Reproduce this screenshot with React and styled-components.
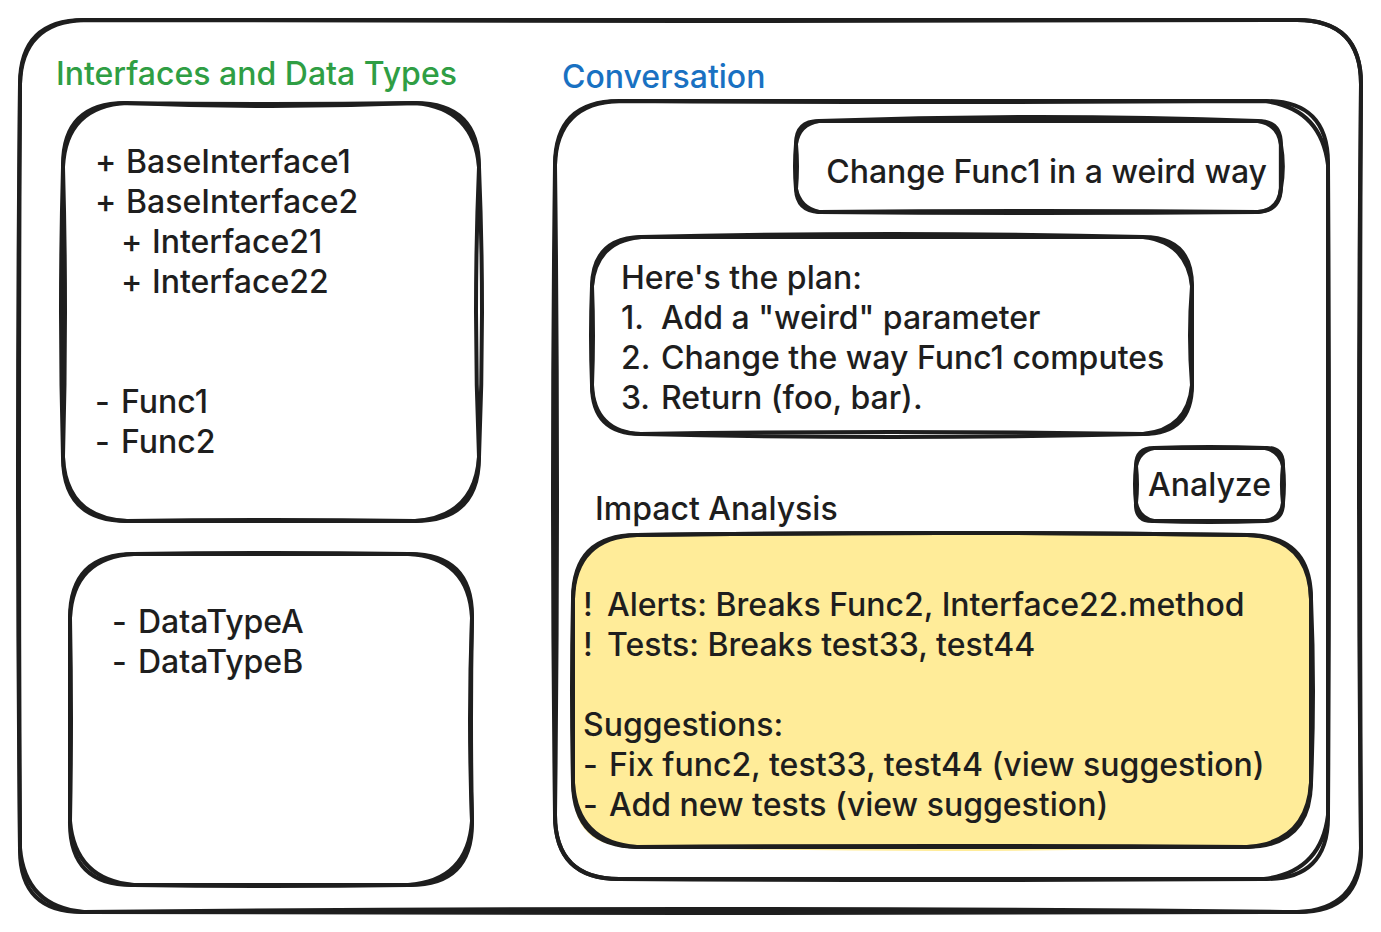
import React, { useLayoutEffect, useRef, useState } from "react";
import styled, { createGlobalStyle, css } from "styled-components";

const ink = "#1e1e1e";

const GlobalStyle = createGlobalStyle`
  *, *::before, *::after { box-sizing: border-box; }
  body { margin: 0; background: #ffffff; }
`;

/* Each pass goes once round the frame. The edge values say how far the middle
   of that edge bows outwards, the corner values how far the corner is pushed out. */
const outline = (w, h, radius, pass) => {
  const r = Math.min(radius, w / 2, h / 2);
  const { t = 0, e = 0, b = 0, l = 0, tl = 0, tr = 0, br = 0, bl = 0 } = pass;
  return [
    `M${r} 0`,
    `Q${w / 2} ${-2 * t} ${w - r} 0`,
    `Q${w + tr} ${-tr} ${w} ${r}`,
    `Q${w + 2 * e} ${h / 2} ${w} ${h - r}`,
    `Q${w + br} ${h + br} ${w - r} ${h}`,
    `Q${w / 2} ${h + 2 * b} ${r} ${h}`,
    `Q${-bl} ${h + bl} 0 ${h - r}`,
    `Q${-2 * l} ${h / 2} 0 ${r}`,
    `Q${-tl} ${-tl} ${r} 0`,
  ].join(" ");
};

const Drawing = styled.svg`
  position: absolute;
  inset: 0;
  width: 100%;
  height: 100%;
  overflow: visible;
  pointer-events: none;
  z-index: -1;
`;

function SketchFrame({ radius, passes, fill, fillPass }) {
  const ref = useRef(null);
  const [size, setSize] = useState({ w: 0, h: 0 });
  useLayoutEffect(() => {
    const measure = () => {
      const box = ref.current.getBoundingClientRect();
      setSize({ w: box.width, h: box.height });
    };
    measure();
    const observer = new ResizeObserver(measure);
    observer.observe(ref.current);
    return () => observer.disconnect();
  }, []);
  return (
    <Drawing ref={ref} aria-hidden="true">
      {size.w > 0 && fill && <path d={outline(size.w, size.h, radius, fillPass)} fill={fill} />}
      {size.w > 0 &&
        passes.map((pass, i) => (
          <path
            key={i}
            d={outline(size.w, size.h, radius, pass)}
            fill="none"
            stroke={ink}
            strokeWidth="4"
            strokeLinecap="round"
          />
        ))}
    </Drawing>
  );
}

const sketched = css`
  position: relative;
  isolation: isolate;
`;

const Page = styled.div`
  min-height: 100vh;
  padding: 20px;
  color: ${ink};
  font-family: Inter, "Liberation Sans", sans-serif;
  font-size: 32px;
  font-weight: 500;
  line-height: 40px;
  white-space: nowrap;
`;

const Board = styled.main`
  ${sketched}
  display: grid;
  grid-template-columns: 423fr 773fr;
  column-gap: 76px;
  align-items: start;
  padding: 33px 33px 27px 36px;
`;

const Column = styled.section`
  display: flex;
  flex-direction: column;
  min-width: 0;
`;

const Title = styled.h2`
  margin: ${(p) => (p.$inset ? "4px 0 4px 7px" : "1px 0 9px")};
  color: ${(p) => p.$color};
  font: inherit;
`;

const Panel = styled.div`
  ${sketched}
`;

const InterfacePanel = styled(Panel)`
  display: flex;
  flex-direction: column;
  gap: 80px;
  margin: 0 0 33px 7px;
  padding: 39px 32px 59px;
`;

const TypePanel = styled(Panel)`
  min-height: 331px;
  margin: 0 7px 0 14px;
  padding: 48px 42px;
`;

const Lines = styled.ul`
  margin: 0;
  padding: 0 0 0 ${(p) => (p.$nested ? "26px" : "0")};
  list-style: none;
`;

const Line = styled.li`
  display: flex;
`;

const Marker = styled.span`
  flex: none;
  width: ${(p) => p.$width}px;
`;

const Chat = styled(Panel)`
  display: flex;
  flex-direction: column;
  padding: 20px 17px 32px 18px;
`;

const Request = styled(Panel)`
  align-self: flex-end;
  min-width: 484px;
  margin: 0 30px 25px 0;
  padding: 31px 14px 20px 30px;
`;

const Reply = styled(Panel)`
  align-self: flex-start;
  min-width: 600px;
  margin: 0 0 14px 19px;
  padding: 21px 27px 16px 29px;
`;

const Paragraph = styled.p`
  margin: 0;
`;

const ImpactBar = styled.div`
  display: flex;
  justify-content: space-between;
  height: 81px;
  margin: 0 28px 6px 22px;
`;

const ImpactTitle = styled.h3`
  align-self: flex-end;
  margin: 0;
  font: inherit;
`;

const AnalyzeButton = styled.button`
  ${sketched}
  align-self: flex-start;
  min-width: 146px;
  height: 73px;
  padding: 0 12px;
  border: 0;
  background: none;
  color: inherit;
  font: inherit;
  cursor: pointer;
`;

const Impact = styled(Panel)`
  display: flex;
  flex-direction: column;
  gap: 40px;
  padding: 50px 10px 22px;
`;

const SuggestionLink = styled.a`
  color: inherit;
  text-decoration: none;
`;

function Row({ mark, width = 26, children }) {
  return (
    <Line>
      <Marker $width={width}>{mark}</Marker>
      <span>{children}</span>
    </Line>
  );
}

export default function App() {
  return (
    <Page>
      <GlobalStyle />
      <Board>
        <SketchFrame
          radius={64}
          passes={[
            { t: 0, e: -2, b: -3, l: 1, bl: -5, br: 1 },
            { t: -1, e: -1, b: 1, l: 2, tl: -2, bl: 1, br: -2 },
          ]}
        />
        <Column>
          <Title $color="#2f9e44">Interfaces and Data Types</Title>
          <InterfacePanel>
            <SketchFrame
              radius={64}
              passes={[
                { t: -1, e: -3, l: 2, tl: -3, tr: -5 },
                { t: -3, e: 3, b: -1, l: -2, tl: 1, bl: -3, br: -4 },
              ]}
            />
            <Lines>
              <Row mark="+" width={31}>BaseInterface1</Row>
              <Row mark="+" width={31}>BaseInterface2</Row>
              <li>
                <Lines $nested>
                  <Row mark="+" width={31}>Interface21</Row>
                  <Row mark="+" width={31}>Interface22</Row>
                </Lines>
              </li>
            </Lines>
            <Lines>
              <Row mark="-">Func1</Row>
              <Row mark="-">Func2</Row>
            </Lines>
          </InterfacePanel>
          <TypePanel>
            <SketchFrame
              radius={64}
              passes={[
                { t: 1, e: -2, l: 0, tl: -3, tr: 1, bl: -5, br: -4 },
                { t: 0, e: -1, b: 1, l: -1, tr: -3, bl: 1, br: 1 },
              ]}
            />
            <Lines>
              <Row mark="-">DataTypeA</Row>
              <Row mark="-">DataTypeB</Row>
            </Lines>
          </TypePanel>
        </Column>
        <Column>
          <Title $color="#1971c2" $inset>Conversation</Title>
          <Chat>
            <SketchFrame
              radius={64}
              passes={[
                { t: 0, e: 1, b: 0, l: 2, tl: -2, tr: 1, br: 1 },
                { t: -1, e: 0, b: 1, l: -2, tr: -7, br: -7 },
              ]}
            />
            <Request>
              <SketchFrame
                radius={23}
                passes={[
                  { t: 4, e: 2, b: 1, l: 1, tl: 0, tr: 0, bl: -4, br: -1 },
                  { t: 0, e: 0, b: -1, l: -1, tl: -3, tr: -3, bl: -1, br: -2 },
                ]}
              />
              <Paragraph>Change Func1 in a weird way</Paragraph>
            </Request>
            <Reply>
              <SketchFrame
                radius={49}
                passes={[
                  { t: 3, e: -2, b: 3, l: 1, tl: -4, tr: 0 },
                  { t: 0, e: 0, b: -2, l: -1, tl: -1, tr: -5, bl: -2, br: -4 },
                ]}
              />
              <Paragraph>Here's the plan:</Paragraph>
              <Lines as="ol">
                <Row mark="1." width={40}>Add a "weird" parameter</Row>
                <Row mark="2." width={40}>Change the way Func1 computes</Row>
                <Row mark="3." width={40}>Return (foo, bar).</Row>
              </Lines>
            </Reply>
            <ImpactBar>
              <ImpactTitle>Impact Analysis</ImpactTitle>
              <AnalyzeButton type="button">
                <SketchFrame
                  radius={18}
                  passes={[
                    { t: 1, e: 1, b: 1, l: 1, tl: 0, tr: 1, bl: 1, br: 0 },
                    { t: 0, e: -1, b: 0, l: -1, tl: -3, tr: -3, bl: -3, br: -2 },
                  ]}
                />
                Analyze
              </AnalyzeButton>
            </ImpactBar>
            <Impact>
              <SketchFrame
                radius={64}
                fill="#ffec99"
                fillPass={{ t: 1, b: 4, bl: 3 }}
                passes={[
                  { t: 2, e: 2, b: 0, l: 1, tl: -2, bl: -1, br: -1 },
                  { t: 2, e: 0, b: -1, l: 0, tr: -2, bl: -4, br: -4 },
                ]}
              />
              <Lines>
                <Row mark="!" width={24}>Alerts: Breaks Func2, Interface22.method</Row>
                <Row mark="!" width={24}>Tests: Breaks test33, test44</Row>
              </Lines>
              <div>
                <Paragraph>Suggestions:</Paragraph>
                <Lines>
                  <Row mark="-">
                    Fix func2, test33, test44 <SuggestionLink href="#fix">(view suggestion)</SuggestionLink>
                  </Row>
                  <Row mark="-">
                    Add new tests <SuggestionLink href="#tests">(view suggestion)</SuggestionLink>
                  </Row>
                </Lines>
              </div>
            </Impact>
          </Chat>
        </Column>
      </Board>
    </Page>
  );
}
